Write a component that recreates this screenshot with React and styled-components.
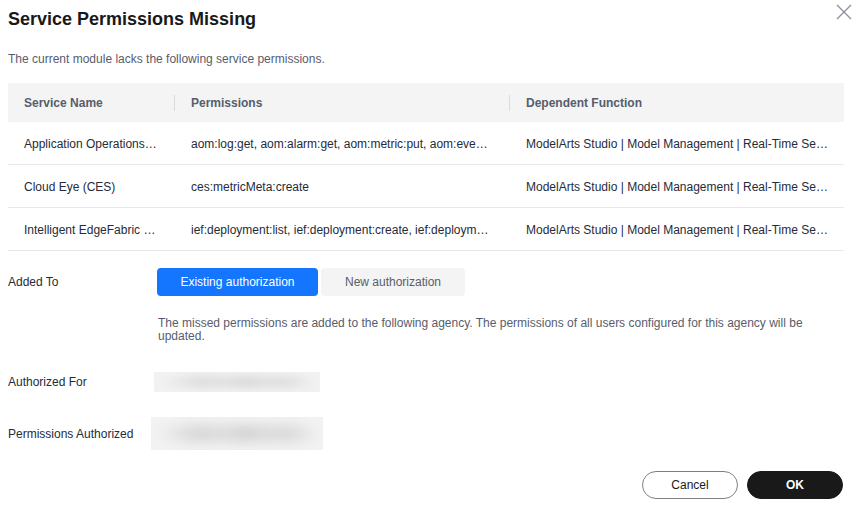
import React from "react";
import styled, { createGlobalStyle } from "styled-components";

const Global = createGlobalStyle`
  body {
    margin: 0;
    background: #ffffff;
    font-family: "Liberation Sans", Arial, sans-serif;
  }
`;

const Dialog = styled.div`
  width: 861px;
  height: 507px;
  box-sizing: border-box;
  padding: 7px 17px 0 8px;
  position: relative;
  background: #ffffff;
`;

const Title = styled.h2`
  margin: 0;
  font-size: 18px;
  line-height: 25px;
  font-weight: 700;
  color: #191919;
`;

const Close = styled.button`
  position: absolute;
  top: 4px;
  right: 9px;
  width: 16px;
  height: 16px;
  padding: 0;
  border: none;
  background: none;
  cursor: pointer;
`;

const Subtitle = styled.p`
  margin: 18px 0 0;
  font-size: 12px;
  line-height: 18px;
  color: #575d6c;
`;

const Table = styled.div`
  margin-top: 15px;
  display: grid;
  grid-template-columns: 167px 335px 1fr;
`;

const HeadCell = styled.div`
  height: 39px;
  background: #f4f4f4;
  display: flex;
  align-items: center;
  padding: 0 16px;
  font-size: 12px;
  font-weight: 700;
  color: #575d6c;
  position: relative;
  &:not(:first-child)::before {
    content: "";
    position: absolute;
    left: -1px;
    top: 12px;
    height: 16px;
    width: 1px;
    background: #dcdcdc;
  }
`;

const Cell = styled.div`
  height: 43px;
  box-sizing: border-box;
  border-bottom: 1px solid #e8e8e8;
  padding: 0 16px;
  font-size: 12px;
  line-height: 44px;
  color: #252b3a;
  white-space: nowrap;
  overflow: hidden;
  text-overflow: ellipsis;
`;

const FormRow = styled.div`
  display: flex;
  align-items: center;
  margin-top: ${(p) => p.$top}px;
`;

const Label = styled.div`
  width: 149px;
  flex-shrink: 0;
  font-size: 12px;
  color: #252b3a;
`;

const Segments = styled.div`
  display: flex;
  gap: 3px;
`;

const Segment = styled.button`
  height: 28px;
  width: ${(p) => p.$w}px;
  border: none;
  border-radius: 4px;
  font-family: inherit;
  font-size: 12px;
  background: ${(p) => (p.$active ? "#1476ff" : "#f4f4f4")};
  color: ${(p) => (p.$active ? "#ffffff" : "#575d6c")};
  cursor: pointer;
`;

const Note = styled.p`
  margin: 21px 0 0 150px;
  font-size: 12px;
  line-height: 13px;
  color: #575d6c;
`;

const Masked = styled.div`
  width: ${(p) => p.$w}px;
  height: ${(p) => p.$h}px;
  margin-left: ${(p) => p.$left}px;
  overflow: hidden;
  background: #f2f2f2;
  position: relative;
  &::after {
    content: "";
    position: absolute;
    inset: 2px 6px;
    filter: blur(4px);
    background: radial-gradient(ellipse 28% 50% at 28% 50%, #d3d3d3, transparent),
      radial-gradient(ellipse 24% 50% at 56% 50%, #cfcfcf, transparent),
      radial-gradient(ellipse 22% 50% at 80% 50%, #d6d6d6, transparent);
  }
`;

const Footer = styled.div`
  display: flex;
  justify-content: flex-end;
  gap: 9px;
  margin-top: 21px;
  padding-right: 1px;
`;

const Action = styled.button`
  width: 96px;
  height: 28px;
  border-radius: 14px;
  font-family: inherit;
  font-size: 12px;
  font-weight: ${(p) => (p.$primary ? 700 : 400)};
  border: 1px solid ${(p) => (p.$primary ? "#191919" : "#7f7f7f")};
  background: ${(p) => (p.$primary ? "#191919" : "#ffffff")};
  color: ${(p) => (p.$primary ? "#ffffff" : "#191919")};
  cursor: pointer;
`;

const rows = [
  [
    "Application Operations Management (AOM)",
    "aom:log:get, aom:alarm:get, aom:metric:put, aom:event:put, aom:metric:get",
    "ModelArts Studio | Model Management | Real-Time Service",
  ],
  [
    "Cloud Eye (CES)",
    "ces:metricMeta:create",
    "ModelArts Studio | Model Management | Real-Time Service",
  ],
  [
    "Intelligent EdgeFabric (IEF)",
    "ief:deployment:list, ief:deployment:create, ief:deployment:delete",
    "ModelArts Studio | Model Management | Real-Time Service",
  ],
];

export default function App() {
  return (
    <>
      <Global />
      <Dialog>
        <Title>Service Permissions Missing</Title>
        <Close aria-label="Close">
          <svg width="16" height="16" viewBox="0 0 16 16">
            <path d="M1 1L15 15M15 1L1 15" stroke="#8a8e99" strokeWidth="1.3" fill="none" />
          </svg>
        </Close>
        <Subtitle>The current module lacks the following service permissions.</Subtitle>
        <Table>
          <HeadCell>Service Name</HeadCell>
          <HeadCell>Permissions</HeadCell>
          <HeadCell>Dependent Function</HeadCell>
          {rows.map((r) => r.map((c, i) => <Cell key={r[0] + i}>{c}</Cell>))}
        </Table>
        <FormRow $top={17}>
          <Label>Added To</Label>
          <Segments>
            <Segment $active $w={161}>Existing authorization</Segment>
            <Segment $w={144}>New authorization</Segment>
          </Segments>
        </FormRow>
        <Note>
          The missed permissions are added to the following agency. The permissions of all users
          configured for this agency will be updated.
        </Note>
        <FormRow $top={29}>
          <Label>Authorized For</Label>
          <Masked $w={166} $h={20} $left={-3} />
        </FormRow>
        <FormRow $top={25}>
          <Label>Permissions Authorized</Label>
          <Masked $w={172} $h={33} $left={-6} />
        </FormRow>
        <Footer>
          <Action>Cancel</Action>
          <Action $primary>OK</Action>
        </Footer>
      </Dialog>
    </>
  );
}
